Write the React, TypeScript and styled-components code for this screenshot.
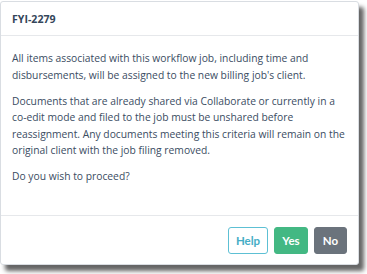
import React from "react";
import styled, { createGlobalStyle } from "styled-components";

const Global = createGlobalStyle`
  html, body { margin: 0; padding: 0; background: #ffffff; }
  body { font-family: "Open Sans", "Noto Sans", sans-serif; }
`;

const Page = styled.div`
  width: 367px;
  height: 274px;
  padding-top: 1px;
  box-sizing: border-box;
`;

const Dialog = styled.div`
  width: 359px;
  height: 264px;
  box-sizing: border-box;
  background: #ffffff;
  border: 1px solid #d9dde2;
  border-radius: 3px;
  box-shadow: 5px 6px 4px rgba(50, 50, 50, 0.75);
  display: flex;
  flex-direction: column;
`;

const Header = styled.div`
  height: 34px;
  box-sizing: border-box;
  padding: 0 11px;
  display: flex;
  align-items: center;
  border-bottom: 1px solid #e6e8eb;
`;

const Title = styled.h1`
  margin: 0;
  font-family: "Open Sans", sans-serif;
  font-size: 10.6px;
  font-weight: 700;
  color: #34465a;
`;

const Body = styled.div`
  flex: 1;
  padding: 14px 11px 0 11px;
  border-bottom: 1px solid #e6e8eb;
`;

const Para = styled.p`
  margin: 0 0 9.5px 0;
  font-size: 10.3px;
  line-height: 16.5px;
  color: #3a4c62;
  white-space: nowrap;
`;

const Footer = styled.div`
  height: 48px;
  box-sizing: border-box;
  padding: 0 11px 0 0;
  display: flex;
  align-items: center;
  justify-content: flex-end;
  gap: 6px;
`;

const Button = styled.button<{ $variant: "help" | "yes" | "no" }>`
  height: 27px;
  padding: 0;
  border-radius: 3px;
  font-family: "Lato", sans-serif;
  font-weight: 700;
  font-size: 11.5px;
  cursor: pointer;
  box-sizing: border-box;
  border: 1px solid
    ${(p) => (p.$variant === "help" ? "#5dc0d4" : p.$variant === "yes" ? "#43b883" : "#6b737c")};
  background: ${(p) => (p.$variant === "help" ? "#ffffff" : p.$variant === "yes" ? "#43b883" : "#6b737c")};
  color: ${(p) => (p.$variant === "help" ? "#45adc6" : "#ffffff")};
  width: ${(p) => (p.$variant === "help" ? "40px" : p.$variant === "yes" ? "34px" : "33px")};
`;

export default function App() {
  return (
    <Page>
      <Global />
      <Dialog>
        <Header>
          <Title>FYI-2279</Title>
        </Header>
        <Body>
          <Para>
            All items associated with this workflow job, including time and
            <br />
            disbursements, will be assigned to the new billing job's client.
          </Para>
          <Para>
            Documents that are already shared via Collaborate or currently in a
            <br />
            co-edit mode and filed to the job must be unshared before
            <br />
            reassignment. Any documents meeting this criteria will remain on the
            <br />
            original client with the job filing removed.
          </Para>
          <Para>Do you wish to proceed?</Para>
        </Body>
        <Footer>
          <Button $variant="help">Help</Button>
          <Button $variant="yes">Yes</Button>
          <Button $variant="no">No</Button>
        </Footer>
      </Dialog>
    </Page>
  );
}
